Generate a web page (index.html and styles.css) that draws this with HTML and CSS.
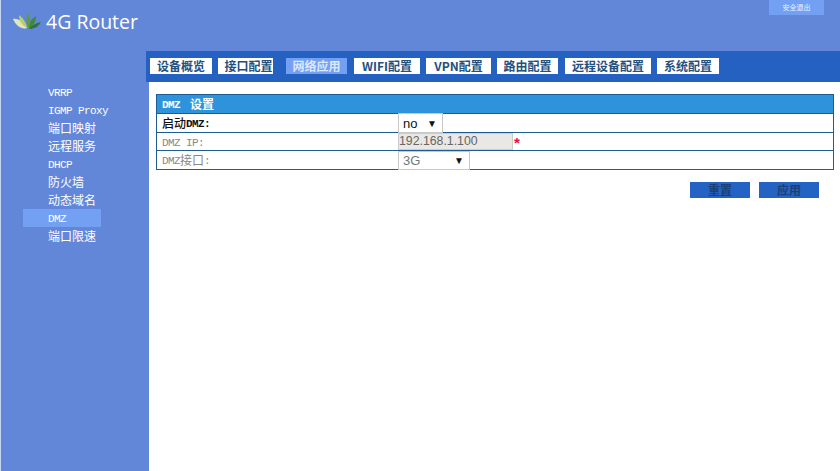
FILE: index.html
```html
<!DOCTYPE html>
<html lang="zh-CN">
<head>
<meta charset="utf-8">
<title>4G Router</title>
<link rel="stylesheet" href="styles.css">
</head>
<body>
<header class="top">
  <div class="brand">
    <svg class="logo" width="32" height="20" viewBox="0 0 32 20" aria-hidden="true">
      <path d="M0 6C5 5 11 9 14 15C9 17 3 13 0 6Z" fill="#dfe8b4"/>
      <path d="M6 2C10 5 13 9 14 15C9 12 6 8 6 2Z" fill="#b5cf6e"/>
      <path d="M15 0C18 5 18 11 16 16C13 11 13 5 15 0Z" fill="#5f9e36"/>
      <path d="M23 3C23 9 20 13 16 16C16 10 18 6 23 3Z" fill="#3f8a35"/>
      <path d="M28 9C25 14 21 16 16 16C19 12 23 10 28 9Z" fill="#2f6f4a"/>
    </svg>
    <span class="brand-name">4G Router</span>
  </div>
  <a class="logout" href="#">安全退出</a>
</header>
<div class="main">
  <nav class="side">
    <a class="side-item" href="#"><span class="lat">VRRP</span></a>
    <a class="side-item" href="#"><span class="lat">IGMP Proxy</span></a>
    <a class="side-item" href="#">端口映射</a>
    <a class="side-item" href="#">远程服务</a>
    <a class="side-item" href="#"><span class="lat">DHCP</span></a>
    <a class="side-item" href="#">防火墙</a>
    <a class="side-item" href="#">动态域名</a>
    <a class="side-item current" href="#"><span class="lat">DMZ</span></a>
    <a class="side-item" href="#">端口限速</a>
  </nav>
  <div class="content">
    <nav class="tabs">
      <a class="tab t-first" href="#">设备概览</a>
      <a class="tab t2" href="#">接口配置</a>
      <a class="tab t1 active" href="#">网络应用</a>
      <a class="tab t3" href="#">WIFI配置</a>
      <a class="tab t4" href="#">VPN配置</a>
      <a class="tab t1" href="#">路由配置</a>
      <a class="tab t5" href="#">远程设备配置</a>
      <a class="tab t-first" href="#">系统配置</a>
    </nav>
    <section class="panel">
      <h2 class="panel-title"><span class="lat">DMZ</span><span class="title-cn">设置</span></h2>
      <div class="row on">
        <div class="label">启动<span class="lat">DMZ:</span></div>
        <div class="field"><div class="select s-no"><span>no</span><span class="arrow">▼</span></div></div>
      </div>
      <div class="row off short">
        <div class="label"><span class="lat">DMZ IP:</span></div>
        <div class="field"><div class="input">192.168.1.100</div><span class="req">*</span></div>
      </div>
      <div class="row off last">
        <div class="label"><span class="lat">DMZ</span>接口<span class="lat">:</span></div>
        <div class="field"><div class="select s-3g"><span>3G</span><span class="arrow">▼</span></div></div>
      </div>
    </section>
    <div class="actions">
      <button class="btn" type="button">重置</button>
      <button class="btn" type="button">应用</button>
    </div>
  </div>
</div>
</body>
</html>
```

FILE: styles.css
```css
* { box-sizing: border-box; }
html, body { margin: 0; height: 100%; }
body {
  width: 840px;
  height: 471px;
  overflow: hidden;
  background: #6387d8;
  border-left: 1px solid #c9d5f0;
  font-family: "Noto Sans CJK SC", sans-serif;
  font-size: 12px;
  color: #111;
  display: flex;
  flex-direction: column;
}
a { text-decoration: none; color: inherit; }
.lat {
  font-family: "Liberation Mono", monospace;
  font-size: 11px;
  letter-spacing: -0.6px;
  vertical-align: 1px;
}

.top {
  height: 51px;
  flex: none;
  display: flex;
  justify-content: space-between;
  align-items: flex-start;
}
.brand {
  display: flex;
  align-items: center;
  gap: 4px;
  margin: 10px 0 0 12px;
}
.logo { display: block; margin-top: 1px; }
.brand-name {
  font-family: "Open Sans", sans-serif;
  font-size: 19.5px;
  line-height: 24px;
  color: #fff;
  margin-left: -3px;
}
.logout {
  width: 55px;
  height: 15px;
  margin-right: 16px;
  background: #74a0f4;
  color: #eef3ff;
  font-size: 7px;
  line-height: 15px;
  text-align: center;
}

.main { flex: 1; display: flex; min-height: 0; }
.side {
  width: 148px;
  flex: none;
  padding-top: 32px;
  padding-left: 22px;
  color: #fff;
}
.side-item {
  display: block;
  width: 78px;
  height: 18px;
  padding-left: 25px;
  line-height: 17px;
  white-space: nowrap;
}
.side-item.current { background: #74a0f4; }

.content {
  flex: 1;
  background: #fff;
}
.tabs {
  height: 31px;
  margin-left: -3px;
  background: #2461c0;
  padding: 7px 0 0 4px;
  display: flex;
  align-items: flex-start;
  gap: 6px;
}
.tab {
  height: 16px;
  background: #fff;
  color: #24507e;
  font-size: 12px;
  font-weight: 700;
  line-height: 16px;
  text-align: center;
  white-space: nowrap;
}
.t-first { width: 62px; }
.t1 { width: 61px; margin-right: 1px; }
.t2 { width: 55px; margin-right: 7px; padding-left: 6px; }
.t3 { width: 66px; }
.t4 { width: 65px; }
.t5 { width: 86px; }
.active { background: #74a0f4; color: #dce8ff; }

.panel {
  width: 678px;
  margin: 12px 0 0 7px;
  border: 1px solid #1f5c94;
  border-top: 0;
}
.panel-title {
  margin: 0;
  height: 20px;
  background: #2f93dc;
  border-top: 1px solid #1f5c94;
  border-bottom: 1px solid #1f5c94;
  color: #fff;
  font-size: 12px;
  font-weight: 700;
  line-height: 18px;
  padding-left: 5px;
}
.panel-title .lat { font-weight: 700; }
.title-cn { margin-left: 10px; }
.row {
  height: 19px;
  display: flex;
  align-items: stretch;
  border-bottom: 1px solid #1f5c94;
}
.row.short { height: 18px; }
.row.last { height: 18px; border-bottom: 0; }
.label {
  width: 241px;
  padding-left: 5px;
  line-height: 17px;
  flex: none;
}
.off .label { color: #888; }
.on .label { color: #111; font-weight: 500; }
.on .lat { font-weight: 700; }
.field { flex: 1; display: flex; align-items: flex-start; }
.select {
  display: flex;
  justify-content: space-between;
  align-items: center;
  height: 20px;
  margin-top: -1px;
  background: #fff;
  border: 1px solid #c8c8c8;
  font-family: "Liberation Sans", sans-serif;
  font-size: 13px;
  padding: 0 5px 0 4px;
}
.off .select { color: #777; }
.s-no { width: 45px; }
.s-3g { width: 72px; margin-top: 0; height: 19px; }
.arrow { font-size: 10px; color: #111; }
.input {
  width: 115px;
  height: 17px;
  background: #e9e8e4;
  border: 1px solid #ccc;
  font-family: "Liberation Sans", sans-serif;
  font-size: 12.3px;
  line-height: 15px;
  padding-left: 0;
  color: #666;
}
.req {
  color: #e0103c;
  font-family: "Liberation Sans", sans-serif;
  font-size: 15px;
  font-weight: 700;
  line-height: 20px;
  margin-left: 1px;
}

.actions {
  display: flex;
  justify-content: flex-end;
  gap: 9px;
  margin: 12px 21px 0 0;
}
.btn {
  width: 60px;
  height: 16px;
  padding: 0;
  border: 0;
  background: #2462c4;
  color: #1b3f74;
  font-family: "Noto Sans CJK SC", sans-serif;
  font-size: 12px;
  font-weight: 700;
  line-height: 16px;
}
```
